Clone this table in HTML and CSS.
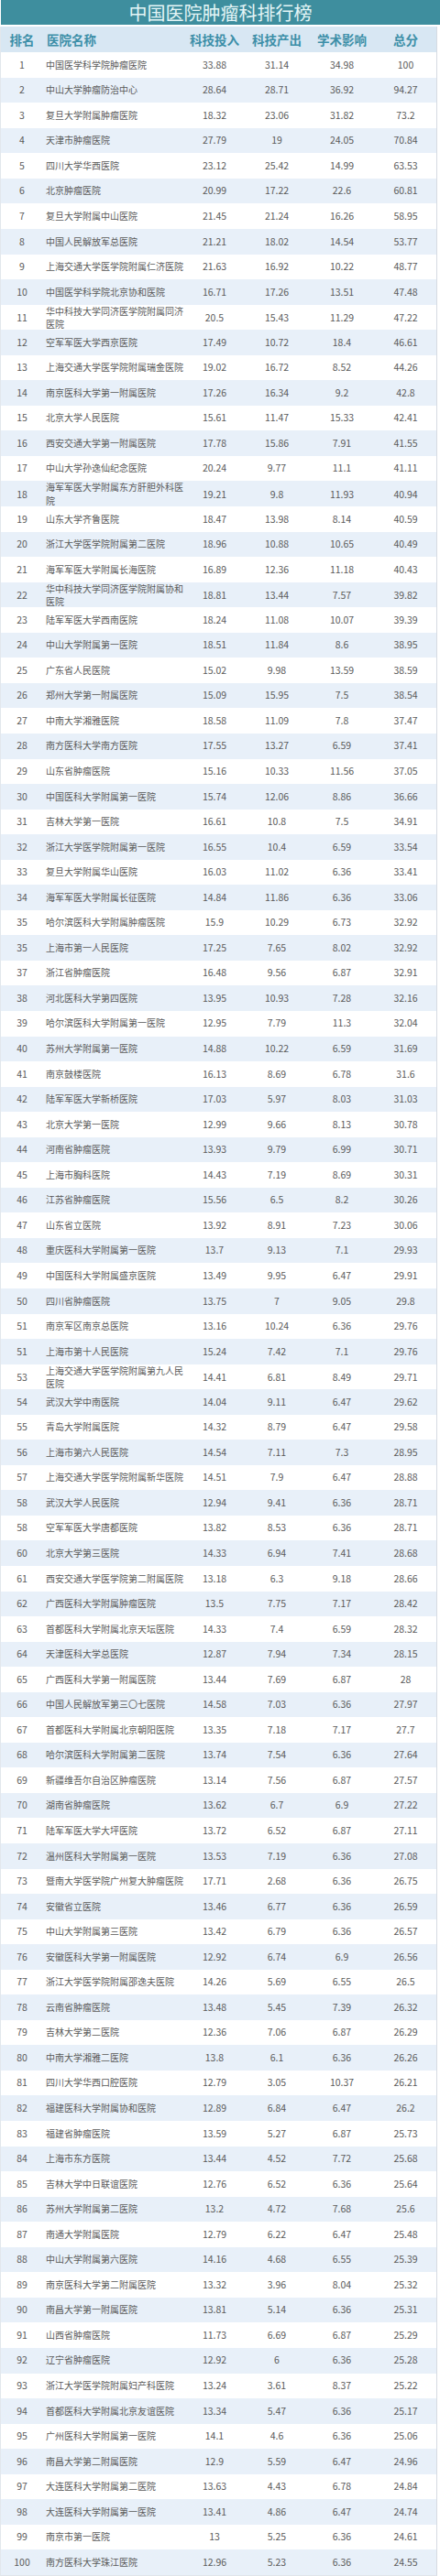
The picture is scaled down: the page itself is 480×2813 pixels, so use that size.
FILE: index.html
```html
<!DOCTYPE html>
<html lang="zh-CN">
<head>
<meta charset="utf-8">
<title>中国医院肿瘤科排行榜</title>
<link rel="stylesheet" href="styles.css">
</head>
<body>
<div class="page">
<div class="title">中国医院肿瘤科排行榜</div>
<div class="table">
<div class="row head"><span class="c rank">排名</span><span class="c name">医院名称</span><span class="c num">科技投入</span><span class="c num">科技产出</span><span class="c num">学术影响</span><span class="c num">总分</span></div>
<div class="row"><span class="c rank">1</span><span class="c name">中国医学科学院肿瘤医院</span><span class="c num">33.88</span><span class="c num">31.14</span><span class="c num">34.98</span><span class="c num">100</span></div>
<div class="row"><span class="c rank">2</span><span class="c name">中山大学肿瘤防治中心</span><span class="c num">28.64</span><span class="c num">28.71</span><span class="c num">36.92</span><span class="c num">94.27</span></div>
<div class="row"><span class="c rank">3</span><span class="c name">复旦大学附属肿瘤医院</span><span class="c num">18.32</span><span class="c num">23.06</span><span class="c num">31.82</span><span class="c num">73.2</span></div>
<div class="row"><span class="c rank">4</span><span class="c name">天津市肿瘤医院</span><span class="c num">27.79</span><span class="c num">19</span><span class="c num">24.05</span><span class="c num">70.84</span></div>
<div class="row"><span class="c rank">5</span><span class="c name">四川大学华西医院</span><span class="c num">23.12</span><span class="c num">25.42</span><span class="c num">14.99</span><span class="c num">63.53</span></div>
<div class="row"><span class="c rank">6</span><span class="c name">北京肿瘤医院</span><span class="c num">20.99</span><span class="c num">17.22</span><span class="c num">22.6</span><span class="c num">60.81</span></div>
<div class="row"><span class="c rank">7</span><span class="c name">复旦大学附属中山医院</span><span class="c num">21.45</span><span class="c num">21.24</span><span class="c num">16.26</span><span class="c num">58.95</span></div>
<div class="row"><span class="c rank">8</span><span class="c name">中国人民解放军总医院</span><span class="c num">21.21</span><span class="c num">18.02</span><span class="c num">14.54</span><span class="c num">53.77</span></div>
<div class="row"><span class="c rank">9</span><span class="c name">上海交通大学医学院附属仁济医院</span><span class="c num">21.63</span><span class="c num">16.92</span><span class="c num">10.22</span><span class="c num">48.77</span></div>
<div class="row"><span class="c rank">10</span><span class="c name">中国医学科学院北京协和医院</span><span class="c num">16.71</span><span class="c num">17.26</span><span class="c num">13.51</span><span class="c num">47.48</span></div>
<div class="row"><span class="c rank">11</span><span class="c name">华中科技大学同济医学院附属同济医院</span><span class="c num">20.5</span><span class="c num">15.43</span><span class="c num">11.29</span><span class="c num">47.22</span></div>
<div class="row"><span class="c rank">12</span><span class="c name">空军军医大学西京医院</span><span class="c num">17.49</span><span class="c num">10.72</span><span class="c num">18.4</span><span class="c num">46.61</span></div>
<div class="row"><span class="c rank">13</span><span class="c name">上海交通大学医学院附属瑞金医院</span><span class="c num">19.02</span><span class="c num">16.72</span><span class="c num">8.52</span><span class="c num">44.26</span></div>
<div class="row"><span class="c rank">14</span><span class="c name">南京医科大学第一附属医院</span><span class="c num">17.26</span><span class="c num">16.34</span><span class="c num">9.2</span><span class="c num">42.8</span></div>
<div class="row"><span class="c rank">15</span><span class="c name">北京大学人民医院</span><span class="c num">15.61</span><span class="c num">11.47</span><span class="c num">15.33</span><span class="c num">42.41</span></div>
<div class="row"><span class="c rank">16</span><span class="c name">西安交通大学第一附属医院</span><span class="c num">17.78</span><span class="c num">15.86</span><span class="c num">7.91</span><span class="c num">41.55</span></div>
<div class="row"><span class="c rank">17</span><span class="c name">中山大学孙逸仙纪念医院</span><span class="c num">20.24</span><span class="c num">9.77</span><span class="c num">11.1</span><span class="c num">41.11</span></div>
<div class="row"><span class="c rank">18</span><span class="c name">海军军医大学附属东方肝胆外科医院</span><span class="c num">19.21</span><span class="c num">9.8</span><span class="c num">11.93</span><span class="c num">40.94</span></div>
<div class="row"><span class="c rank">19</span><span class="c name">山东大学齐鲁医院</span><span class="c num">18.47</span><span class="c num">13.98</span><span class="c num">8.14</span><span class="c num">40.59</span></div>
<div class="row"><span class="c rank">20</span><span class="c name">浙江大学医学院附属第二医院</span><span class="c num">18.96</span><span class="c num">10.88</span><span class="c num">10.65</span><span class="c num">40.49</span></div>
<div class="row"><span class="c rank">21</span><span class="c name">海军军医大学附属长海医院</span><span class="c num">16.89</span><span class="c num">12.36</span><span class="c num">11.18</span><span class="c num">40.43</span></div>
<div class="row"><span class="c rank">22</span><span class="c name">华中科技大学同济医学院附属协和医院</span><span class="c num">18.81</span><span class="c num">13.44</span><span class="c num">7.57</span><span class="c num">39.82</span></div>
<div class="row"><span class="c rank">23</span><span class="c name">陆军军医大学西南医院</span><span class="c num">18.24</span><span class="c num">11.08</span><span class="c num">10.07</span><span class="c num">39.39</span></div>
<div class="row"><span class="c rank">24</span><span class="c name">中山大学附属第一医院</span><span class="c num">18.51</span><span class="c num">11.84</span><span class="c num">8.6</span><span class="c num">38.95</span></div>
<div class="row"><span class="c rank">25</span><span class="c name">广东省人民医院</span><span class="c num">15.02</span><span class="c num">9.98</span><span class="c num">13.59</span><span class="c num">38.59</span></div>
<div class="row"><span class="c rank">26</span><span class="c name">郑州大学第一附属医院</span><span class="c num">15.09</span><span class="c num">15.95</span><span class="c num">7.5</span><span class="c num">38.54</span></div>
<div class="row"><span class="c rank">27</span><span class="c name">中南大学湘雅医院</span><span class="c num">18.58</span><span class="c num">11.09</span><span class="c num">7.8</span><span class="c num">37.47</span></div>
<div class="row"><span class="c rank">28</span><span class="c name">南方医科大学南方医院</span><span class="c num">17.55</span><span class="c num">13.27</span><span class="c num">6.59</span><span class="c num">37.41</span></div>
<div class="row"><span class="c rank">29</span><span class="c name">山东省肿瘤医院</span><span class="c num">15.16</span><span class="c num">10.33</span><span class="c num">11.56</span><span class="c num">37.05</span></div>
<div class="row"><span class="c rank">30</span><span class="c name">中国医科大学附属第一医院</span><span class="c num">15.74</span><span class="c num">12.06</span><span class="c num">8.86</span><span class="c num">36.66</span></div>
<div class="row"><span class="c rank">31</span><span class="c name">吉林大学第一医院</span><span class="c num">16.61</span><span class="c num">10.8</span><span class="c num">7.5</span><span class="c num">34.91</span></div>
<div class="row"><span class="c rank">32</span><span class="c name">浙江大学医学院附属第一医院</span><span class="c num">16.55</span><span class="c num">10.4</span><span class="c num">6.59</span><span class="c num">33.54</span></div>
<div class="row"><span class="c rank">33</span><span class="c name">复旦大学附属华山医院</span><span class="c num">16.03</span><span class="c num">11.02</span><span class="c num">6.36</span><span class="c num">33.41</span></div>
<div class="row"><span class="c rank">34</span><span class="c name">海军军医大学附属长征医院</span><span class="c num">14.84</span><span class="c num">11.86</span><span class="c num">6.36</span><span class="c num">33.06</span></div>
<div class="row"><span class="c rank">35</span><span class="c name">哈尔滨医科大学附属肿瘤医院</span><span class="c num">15.9</span><span class="c num">10.29</span><span class="c num">6.73</span><span class="c num">32.92</span></div>
<div class="row"><span class="c rank">35</span><span class="c name">上海市第一人民医院</span><span class="c num">17.25</span><span class="c num">7.65</span><span class="c num">8.02</span><span class="c num">32.92</span></div>
<div class="row"><span class="c rank">37</span><span class="c name">浙江省肿瘤医院</span><span class="c num">16.48</span><span class="c num">9.56</span><span class="c num">6.87</span><span class="c num">32.91</span></div>
<div class="row"><span class="c rank">38</span><span class="c name">河北医科大学第四医院</span><span class="c num">13.95</span><span class="c num">10.93</span><span class="c num">7.28</span><span class="c num">32.16</span></div>
<div class="row"><span class="c rank">39</span><span class="c name">哈尔滨医科大学附属第一医院</span><span class="c num">12.95</span><span class="c num">7.79</span><span class="c num">11.3</span><span class="c num">32.04</span></div>
<div class="row"><span class="c rank">40</span><span class="c name">苏州大学附属第一医院</span><span class="c num">14.88</span><span class="c num">10.22</span><span class="c num">6.59</span><span class="c num">31.69</span></div>
<div class="row"><span class="c rank">41</span><span class="c name">南京鼓楼医院</span><span class="c num">16.13</span><span class="c num">8.69</span><span class="c num">6.78</span><span class="c num">31.6</span></div>
<div class="row"><span class="c rank">42</span><span class="c name">陆军军医大学新桥医院</span><span class="c num">17.03</span><span class="c num">5.97</span><span class="c num">8.03</span><span class="c num">31.03</span></div>
<div class="row"><span class="c rank">43</span><span class="c name">北京大学第一医院</span><span class="c num">12.99</span><span class="c num">9.66</span><span class="c num">8.13</span><span class="c num">30.78</span></div>
<div class="row"><span class="c rank">44</span><span class="c name">河南省肿瘤医院</span><span class="c num">13.93</span><span class="c num">9.79</span><span class="c num">6.99</span><span class="c num">30.71</span></div>
<div class="row"><span class="c rank">45</span><span class="c name">上海市胸科医院</span><span class="c num">14.43</span><span class="c num">7.19</span><span class="c num">8.69</span><span class="c num">30.31</span></div>
<div class="row"><span class="c rank">46</span><span class="c name">江苏省肿瘤医院</span><span class="c num">15.56</span><span class="c num">6.5</span><span class="c num">8.2</span><span class="c num">30.26</span></div>
<div class="row"><span class="c rank">47</span><span class="c name">山东省立医院</span><span class="c num">13.92</span><span class="c num">8.91</span><span class="c num">7.23</span><span class="c num">30.06</span></div>
<div class="row"><span class="c rank">48</span><span class="c name">重庆医科大学附属第一医院</span><span class="c num">13.7</span><span class="c num">9.13</span><span class="c num">7.1</span><span class="c num">29.93</span></div>
<div class="row"><span class="c rank">49</span><span class="c name">中国医科大学附属盛京医院</span><span class="c num">13.49</span><span class="c num">9.95</span><span class="c num">6.47</span><span class="c num">29.91</span></div>
<div class="row"><span class="c rank">50</span><span class="c name">四川省肿瘤医院</span><span class="c num">13.75</span><span class="c num">7</span><span class="c num">9.05</span><span class="c num">29.8</span></div>
<div class="row"><span class="c rank">51</span><span class="c name">南京军区南京总医院</span><span class="c num">13.16</span><span class="c num">10.24</span><span class="c num">6.36</span><span class="c num">29.76</span></div>
<div class="row"><span class="c rank">51</span><span class="c name">上海市第十人民医院</span><span class="c num">15.24</span><span class="c num">7.42</span><span class="c num">7.1</span><span class="c num">29.76</span></div>
<div class="row"><span class="c rank">53</span><span class="c name">上海交通大学医学院附属第九人民医院</span><span class="c num">14.41</span><span class="c num">6.81</span><span class="c num">8.49</span><span class="c num">29.71</span></div>
<div class="row"><span class="c rank">54</span><span class="c name">武汉大学中南医院</span><span class="c num">14.04</span><span class="c num">9.11</span><span class="c num">6.47</span><span class="c num">29.62</span></div>
<div class="row"><span class="c rank">55</span><span class="c name">青岛大学附属医院</span><span class="c num">14.32</span><span class="c num">8.79</span><span class="c num">6.47</span><span class="c num">29.58</span></div>
<div class="row"><span class="c rank">56</span><span class="c name">上海市第六人民医院</span><span class="c num">14.54</span><span class="c num">7.11</span><span class="c num">7.3</span><span class="c num">28.95</span></div>
<div class="row"><span class="c rank">57</span><span class="c name">上海交通大学医学院附属新华医院</span><span class="c num">14.51</span><span class="c num">7.9</span><span class="c num">6.47</span><span class="c num">28.88</span></div>
<div class="row"><span class="c rank">58</span><span class="c name">武汉大学人民医院</span><span class="c num">12.94</span><span class="c num">9.41</span><span class="c num">6.36</span><span class="c num">28.71</span></div>
<div class="row"><span class="c rank">58</span><span class="c name">空军军医大学唐都医院</span><span class="c num">13.82</span><span class="c num">8.53</span><span class="c num">6.36</span><span class="c num">28.71</span></div>
<div class="row"><span class="c rank">60</span><span class="c name">北京大学第三医院</span><span class="c num">14.33</span><span class="c num">6.94</span><span class="c num">7.41</span><span class="c num">28.68</span></div>
<div class="row"><span class="c rank">61</span><span class="c name">西安交通大学医学院第二附属医院</span><span class="c num">13.18</span><span class="c num">6.3</span><span class="c num">9.18</span><span class="c num">28.66</span></div>
<div class="row"><span class="c rank">62</span><span class="c name">广西医科大学附属肿瘤医院</span><span class="c num">13.5</span><span class="c num">7.75</span><span class="c num">7.17</span><span class="c num">28.42</span></div>
<div class="row"><span class="c rank">63</span><span class="c name">首都医科大学附属北京天坛医院</span><span class="c num">14.33</span><span class="c num">7.4</span><span class="c num">6.59</span><span class="c num">28.32</span></div>
<div class="row"><span class="c rank">64</span><span class="c name">天津医科大学总医院</span><span class="c num">12.87</span><span class="c num">7.94</span><span class="c num">7.34</span><span class="c num">28.15</span></div>
<div class="row"><span class="c rank">65</span><span class="c name">广西医科大学第一附属医院</span><span class="c num">13.44</span><span class="c num">7.69</span><span class="c num">6.87</span><span class="c num">28</span></div>
<div class="row"><span class="c rank">66</span><span class="c name">中国人民解放军第三〇七医院</span><span class="c num">14.58</span><span class="c num">7.03</span><span class="c num">6.36</span><span class="c num">27.97</span></div>
<div class="row"><span class="c rank">67</span><span class="c name">首都医科大学附属北京朝阳医院</span><span class="c num">13.35</span><span class="c num">7.18</span><span class="c num">7.17</span><span class="c num">27.7</span></div>
<div class="row"><span class="c rank">68</span><span class="c name">哈尔滨医科大学附属第二医院</span><span class="c num">13.74</span><span class="c num">7.54</span><span class="c num">6.36</span><span class="c num">27.64</span></div>
<div class="row"><span class="c rank">69</span><span class="c name">新疆维吾尔自治区肿瘤医院</span><span class="c num">13.14</span><span class="c num">7.56</span><span class="c num">6.87</span><span class="c num">27.57</span></div>
<div class="row"><span class="c rank">70</span><span class="c name">湖南省肿瘤医院</span><span class="c num">13.62</span><span class="c num">6.7</span><span class="c num">6.9</span><span class="c num">27.22</span></div>
<div class="row"><span class="c rank">71</span><span class="c name">陆军军医大学大坪医院</span><span class="c num">13.72</span><span class="c num">6.52</span><span class="c num">6.87</span><span class="c num">27.11</span></div>
<div class="row"><span class="c rank">72</span><span class="c name">温州医科大学附属第一医院</span><span class="c num">13.53</span><span class="c num">7.19</span><span class="c num">6.36</span><span class="c num">27.08</span></div>
<div class="row"><span class="c rank">73</span><span class="c name">暨南大学医学院广州复大肿瘤医院</span><span class="c num">17.71</span><span class="c num">2.68</span><span class="c num">6.36</span><span class="c num">26.75</span></div>
<div class="row"><span class="c rank">74</span><span class="c name">安徽省立医院</span><span class="c num">13.46</span><span class="c num">6.77</span><span class="c num">6.36</span><span class="c num">26.59</span></div>
<div class="row"><span class="c rank">75</span><span class="c name">中山大学附属第三医院</span><span class="c num">13.42</span><span class="c num">6.79</span><span class="c num">6.36</span><span class="c num">26.57</span></div>
<div class="row"><span class="c rank">76</span><span class="c name">安徽医科大学第一附属医院</span><span class="c num">12.92</span><span class="c num">6.74</span><span class="c num">6.9</span><span class="c num">26.56</span></div>
<div class="row"><span class="c rank">77</span><span class="c name">浙江大学医学院附属邵逸夫医院</span><span class="c num">14.26</span><span class="c num">5.69</span><span class="c num">6.55</span><span class="c num">26.5</span></div>
<div class="row"><span class="c rank">78</span><span class="c name">云南省肿瘤医院</span><span class="c num">13.48</span><span class="c num">5.45</span><span class="c num">7.39</span><span class="c num">26.32</span></div>
<div class="row"><span class="c rank">79</span><span class="c name">吉林大学第二医院</span><span class="c num">12.36</span><span class="c num">7.06</span><span class="c num">6.87</span><span class="c num">26.29</span></div>
<div class="row"><span class="c rank">80</span><span class="c name">中南大学湘雅二医院</span><span class="c num">13.8</span><span class="c num">6.1</span><span class="c num">6.36</span><span class="c num">26.26</span></div>
<div class="row"><span class="c rank">81</span><span class="c name">四川大学华西口腔医院</span><span class="c num">12.79</span><span class="c num">3.05</span><span class="c num">10.37</span><span class="c num">26.21</span></div>
<div class="row"><span class="c rank">82</span><span class="c name">福建医科大学附属协和医院</span><span class="c num">12.89</span><span class="c num">6.84</span><span class="c num">6.47</span><span class="c num">26.2</span></div>
<div class="row"><span class="c rank">83</span><span class="c name">福建省肿瘤医院</span><span class="c num">13.59</span><span class="c num">5.27</span><span class="c num">6.87</span><span class="c num">25.73</span></div>
<div class="row"><span class="c rank">84</span><span class="c name">上海市东方医院</span><span class="c num">13.44</span><span class="c num">4.52</span><span class="c num">7.72</span><span class="c num">25.68</span></div>
<div class="row"><span class="c rank">85</span><span class="c name">吉林大学中日联谊医院</span><span class="c num">12.76</span><span class="c num">6.52</span><span class="c num">6.36</span><span class="c num">25.64</span></div>
<div class="row"><span class="c rank">86</span><span class="c name">苏州大学附属第二医院</span><span class="c num">13.2</span><span class="c num">4.72</span><span class="c num">7.68</span><span class="c num">25.6</span></div>
<div class="row"><span class="c rank">87</span><span class="c name">南通大学附属医院</span><span class="c num">12.79</span><span class="c num">6.22</span><span class="c num">6.47</span><span class="c num">25.48</span></div>
<div class="row"><span class="c rank">88</span><span class="c name">中山大学附属第六医院</span><span class="c num">14.16</span><span class="c num">4.68</span><span class="c num">6.55</span><span class="c num">25.39</span></div>
<div class="row"><span class="c rank">89</span><span class="c name">南京医科大学第二附属医院</span><span class="c num">13.32</span><span class="c num">3.96</span><span class="c num">8.04</span><span class="c num">25.32</span></div>
<div class="row"><span class="c rank">90</span><span class="c name">南昌大学第一附属医院</span><span class="c num">13.81</span><span class="c num">5.14</span><span class="c num">6.36</span><span class="c num">25.31</span></div>
<div class="row"><span class="c rank">91</span><span class="c name">山西省肿瘤医院</span><span class="c num">11.73</span><span class="c num">6.69</span><span class="c num">6.87</span><span class="c num">25.29</span></div>
<div class="row"><span class="c rank">92</span><span class="c name">辽宁省肿瘤医院</span><span class="c num">12.92</span><span class="c num">6</span><span class="c num">6.36</span><span class="c num">25.28</span></div>
<div class="row"><span class="c rank">93</span><span class="c name">浙江大学医学院附属妇产科医院</span><span class="c num">13.24</span><span class="c num">3.61</span><span class="c num">8.37</span><span class="c num">25.22</span></div>
<div class="row"><span class="c rank">94</span><span class="c name">首都医科大学附属北京友谊医院</span><span class="c num">13.34</span><span class="c num">5.47</span><span class="c num">6.36</span><span class="c num">25.17</span></div>
<div class="row"><span class="c rank">95</span><span class="c name">广州医科大学附属第一医院</span><span class="c num">14.1</span><span class="c num">4.6</span><span class="c num">6.36</span><span class="c num">25.06</span></div>
<div class="row"><span class="c rank">96</span><span class="c name">南昌大学第二附属医院</span><span class="c num">12.9</span><span class="c num">5.59</span><span class="c num">6.47</span><span class="c num">24.96</span></div>
<div class="row"><span class="c rank">97</span><span class="c name">大连医科大学附属第二医院</span><span class="c num">13.63</span><span class="c num">4.43</span><span class="c num">6.78</span><span class="c num">24.84</span></div>
<div class="row"><span class="c rank">98</span><span class="c name">大连医科大学附属第一医院</span><span class="c num">13.41</span><span class="c num">4.86</span><span class="c num">6.47</span><span class="c num">24.74</span></div>
<div class="row"><span class="c rank">99</span><span class="c name">南京市第一医院</span><span class="c num">13</span><span class="c num">5.25</span><span class="c num">6.36</span><span class="c num">24.61</span></div>
<div class="row"><span class="c rank">100</span><span class="c name">南方医科大学珠江医院</span><span class="c num">12.96</span><span class="c num">5.23</span><span class="c num">6.36</span><span class="c num">24.55</span></div>
</div>
</div>
</body>
</html>
```

FILE: styles.css
```css
html, body {
  margin: 0;
  padding: 0;
  background: #ffffff;
}

.page {
  width: 480px;
  font-family: "Noto Sans CJK SC", "Noto Sans", sans-serif;
  color: #5a5a5a;
}

.title {
  height: 27px;
  margin-left: 1px;
  background: #3e8e9e;
  color: #e4f5f6;
  font-size: 20px;
  line-height: 27px;
  text-align: center;
  letter-spacing: 0;
  margin-bottom: 2px;
}

.table {
  width: 475px;
  border-left: 1px solid #e2e7ec;
  border-right: 1px solid #d5dbe2;
  border-bottom: 1px solid #e0e5ea;
}

.row {
  display: grid;
  grid-template-columns: 46px 154px 66px 70px 72px 67px;
  height: 27.55px;
  align-items: center;
  background: #ffffff;
}

.row:nth-child(odd) {
  background: #e8f0f9;
}

.row.head {
  height: 28.2px;
  background: #d8e7f3;
  color: #3d8fa8;
  font-size: 13.5px;
  font-weight: 700;
}

.c {
  display: block;
  text-align: center;
  font-size: 10.5px;
  line-height: 14.5px;
}

.head .c {
  font-size: 13.5px;
  line-height: 18px;
}

.name {
  text-align: left;
  padding-left: 3px;
  padding-right: 1px;
  font-size: 10px;
}

.head .name {
  padding-left: 4px;
}
```
